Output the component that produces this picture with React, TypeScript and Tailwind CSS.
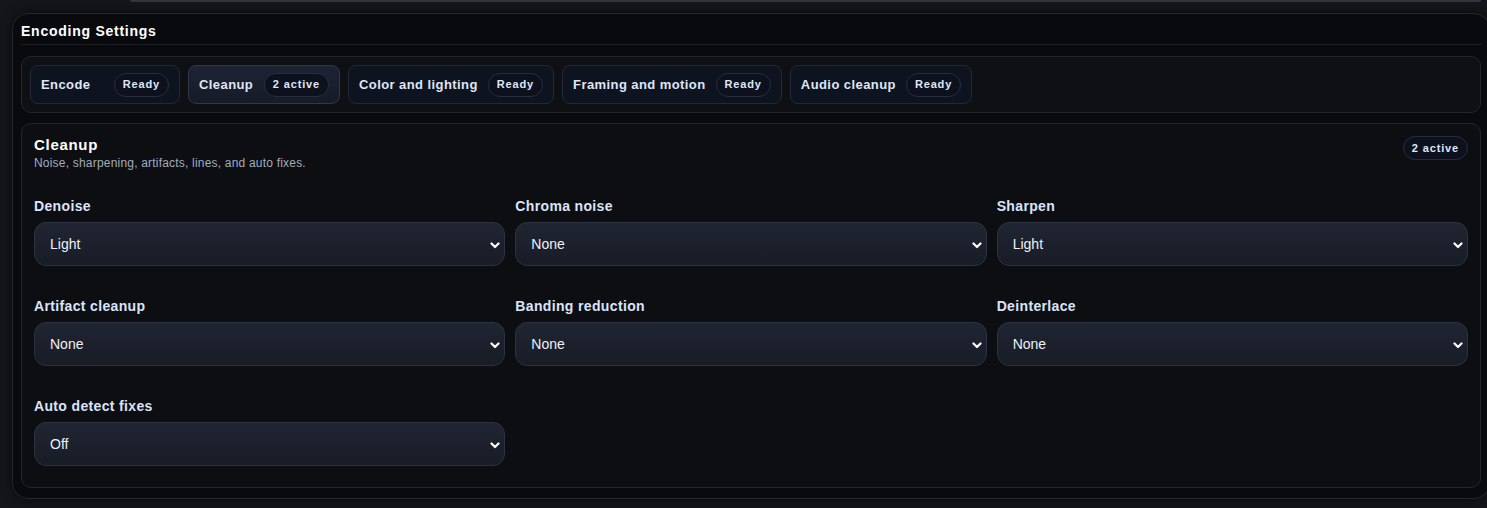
const tabs = [
  { name: 'Encode', badge: 'Ready' },
  { name: 'Cleanup', badge: '2 active', active: true },
  { name: 'Color and lighting', badge: 'Ready' },
  { name: 'Framing and motion', badge: 'Ready' },
  { name: 'Audio cleanup', badge: 'Ready' },
]

const fields = [
  { label: 'Denoise', value: 'Light' },
  { label: 'Chroma noise', value: 'None' },
  { label: 'Sharpen', value: 'Light' },
  { label: 'Artifact cleanup', value: 'None' },
  { label: 'Banding reduction', value: 'None' },
  { label: 'Deinterlace', value: 'None' },
  { label: 'Auto detect fixes', value: 'Off' },
]

function Badge({ children }: { children: string }) {
  return (
    <span className="inline-flex h-[24px] items-center rounded-full border border-[#262e40] bg-[#0c111d] px-[8px] text-[11px] font-bold tracking-[0.85px] text-[#dfe7f7]">
      {children}
    </span>
  )
}

function Field({ label, value }: { label: string; value: string }) {
  return (
    <div className="flex flex-col">
      <label className="h-[20px] text-[14px] font-bold leading-[20px] tracking-[0.35px] text-[#dbe4fa]">{label}</label>
      <div className="relative mt-[6px] flex h-[44px] items-center rounded-[12px] border border-[#2c3240] bg-gradient-to-b from-[#202533] to-[#181c26] pl-[15px] text-[14px] text-[#eef1f6]">
        {value}
        <svg className="absolute right-[4px] top-[19px]" width="10" height="7" viewBox="0 0 10 7" fill="none">
          <path d="M1.5 1.5 5 5 8.5 1.5" stroke="white" strokeWidth="2.2" strokeLinecap="round" strokeLinejoin="round" />
        </svg>
      </div>
    </div>
  )
}

export default function App() {
  return (
    <div className="h-[508px] w-[1487px] overflow-hidden bg-[#141619] font-['Liberation_Sans',Arial,sans-serif]">
      <div className="ml-[130px] mr-[6px] h-[2px] rounded-b bg-[#33363f]" />
      <div className="ml-[12px] mt-[11px] w-[1478px] rounded-[16px] border border-[#24262b] bg-[#080a0e] px-[8px] pb-[10px] pt-[7px] shadow-[0_0_12px_rgba(0,0,0,0.6)]">
        <div className="border-b border-[#1c1e23] pb-[3px]">
          <h2 className="text-[14px] font-bold leading-[20px] tracking-[0.75px] text-white">Encoding Settings</h2>
        </div>

        <div className="mt-[11px] flex gap-[8px] rounded-[10px] border border-[#23252a] bg-[#0e1014] p-[8px]">
          {tabs.map((t) => (
            <div
              key={t.name}
              className={
                t.active
                  ? 'flex h-[39px] min-w-[152px] items-center justify-between gap-[9px] rounded-[8px] border border-[#30374a] bg-gradient-to-b from-[#1d2333] to-[#161b27] px-[10px]'
                  : 'flex h-[39px] min-w-[150px] items-center justify-between gap-[10px] rounded-[8px] border border-[#222838] bg-[#0e1320] px-[10px]'
              }
            >
              <span className="text-[13px] font-bold tracking-[0.42px] text-[#dfe6f5]">{t.name}</span>
              <Badge>{t.badge}</Badge>
            </div>
          ))}
        </div>

        <div className="mt-[10px] rounded-[10px] border border-[#23252a] bg-[#0c0e12] px-[12px] pb-[21px] pt-[12px]">
          <div className="flex items-start justify-between">
            <div className="pt-[1px]">
              <h3 className="text-[15px] font-bold leading-[16px] tracking-[0.7px] text-white">Cleanup</h3>
              <p className="mt-[2px] text-[12px] leading-[16px] tracking-[0.2px] text-[#a3acbd]">Noise, sharpening, artifacts, lines, and auto fixes.</p>
            </div>
            <Badge>2 active</Badge>
          </div>

          <div className="mt-[25px] grid grid-cols-3 gap-x-[10px] gap-y-[30px]">
            {fields.map((f) => (
              <Field key={f.label} label={f.label} value={f.value} />
            ))}
          </div>
        </div>
      </div>
    </div>
  )
}
